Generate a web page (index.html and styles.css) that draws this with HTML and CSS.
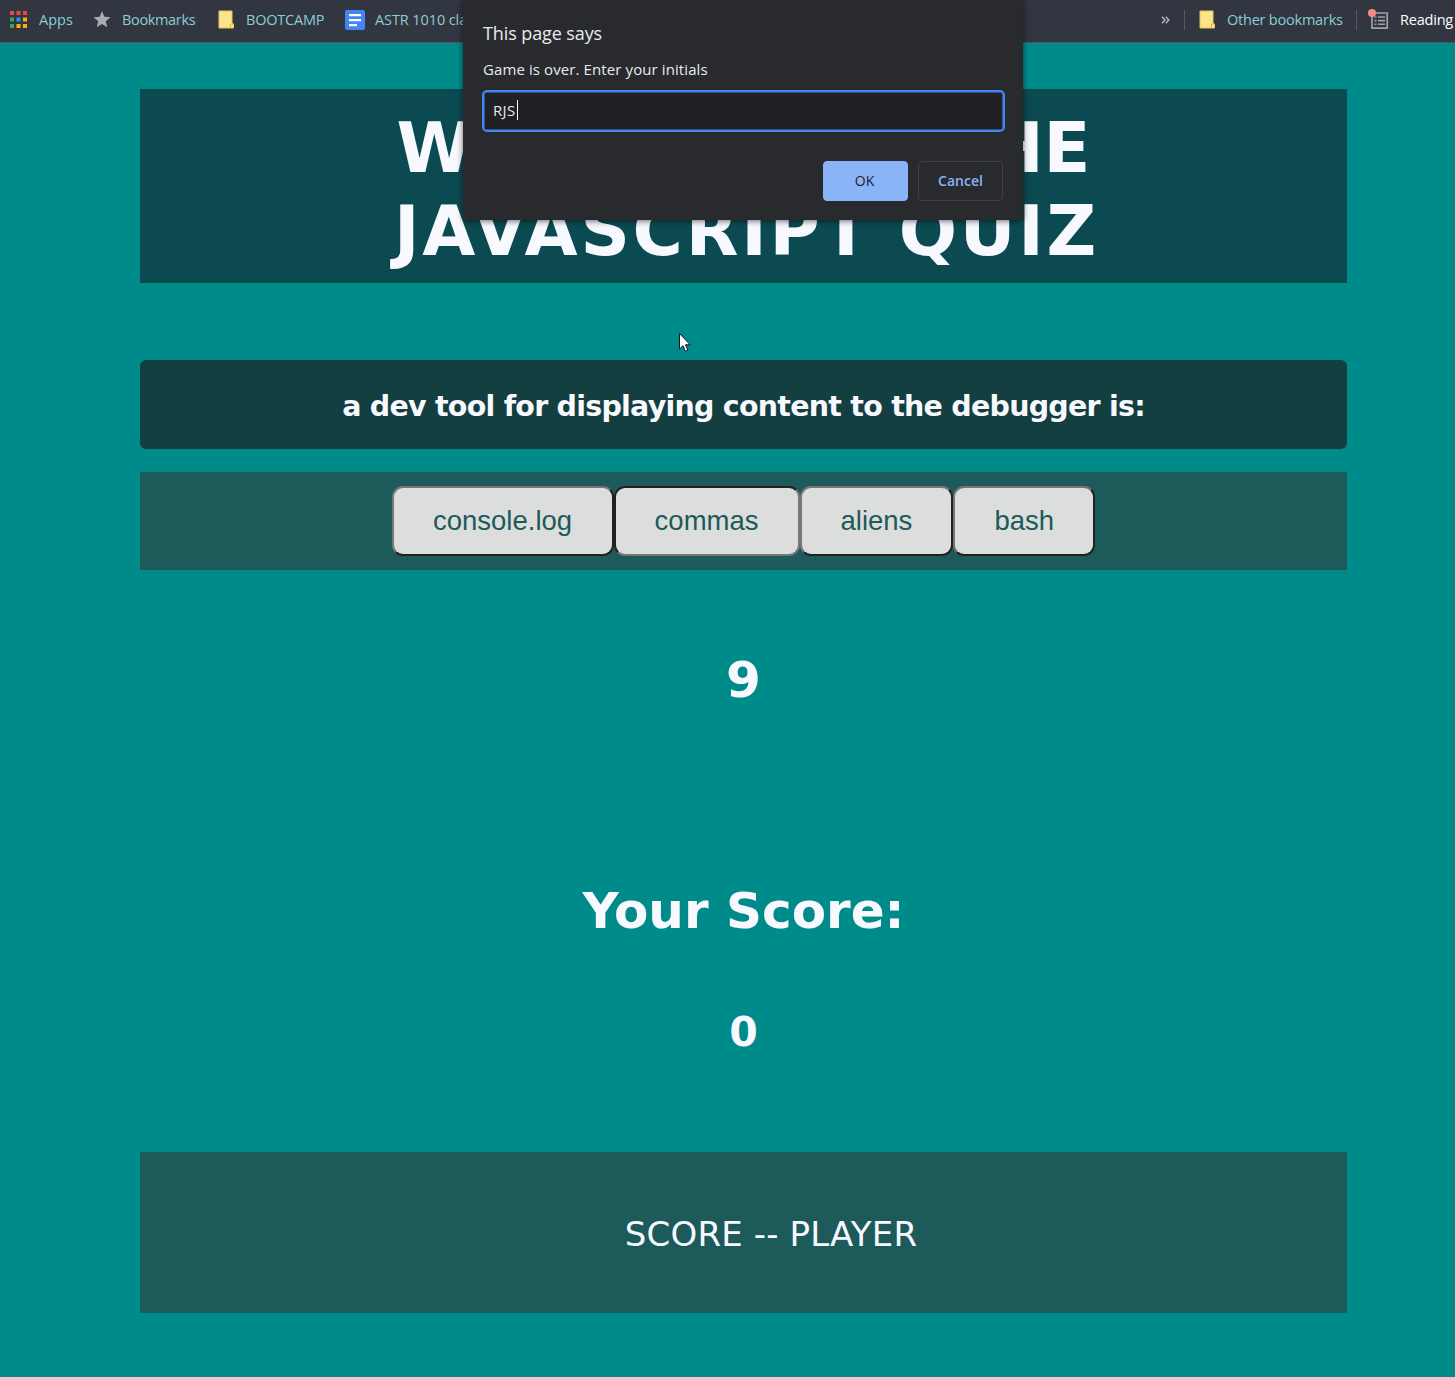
FILE: index.html
```
<!DOCTYPE html>
<html lang="en">
<head>
<meta charset="utf-8">
<title>JavaScript Quiz</title>
<link rel="stylesheet" href="styles.css">
</head>
<body>
<nav class="bookmarks">
  <svg class="apps-icon" width="17" height="17" viewBox="0 0 17 17"><path fill="#f04438" d="M0 0h4v4H0zM6.500 0h4v4h-4zM13 0h4v4h-4z"/><path fill="#34a853" d="M0 6.500h4v4H0zM0 13h4v4H0z"/><path fill="#2a8cf4" d="M6.500 6.500h4v4h-4z"/><path fill="#fbaf0a" d="M13 6.500h4v4h-4zM6.500 13h4v4h-4zM13 13h4v4h-4z"/></svg>
  <span class="bm bm-apps">Apps</span>
  <svg class="star-icon" width="18" height="17" viewBox="0 0 18 17"><path fill="#a9adb0" d="M9 0l2.300 5.800 6.200.4-4.800 4 1.600 6.100L9 12.900l-5.300 3.400 1.600-6.100-4.800-4 6.200-.4z"/></svg>
  <span class="bm bm-book">Bookmarks</span>
  <svg class="folder-icon" width="17" height="19" viewBox="0 0 17 19"><path fill="#fde38b" stroke="#e5c55d" d="M1 1h13v12l1.500 1v4H1z"/><path fill="none" stroke="#d9b640" d="M12.500 17.500v-3.500h2.500"/></svg>
  <span class="bm bm-camp">BOOTCAMP</span>
  <svg class="doc-icon" width="20" height="20" viewBox="0 0 20 20"><rect width="20" height="20" rx="2" fill="#4285f4"/><path fill="#fff" d="M4 4h12v2.200H4zM4 9h12v2.200H4zM4 14h8v2.200H4z"/></svg>
  <span class="bm bm-astr">ASTR 1010 class</span>
  <div class="bookmarks-right">
    <svg class="more-icon" width="9" height="8" viewBox="0 0 9 8"><path fill="none" stroke="#b4b9c0" stroke-width="1.400" d="M1 .8L4 4 1 7.200M4.800.8l3 3.200-3 3.200"/></svg>
    <i class="divider"></i>
    <svg class="folder-icon other" width="17" height="19" viewBox="0 0 17 19"><path fill="#fde38b" stroke="#e5c55d" d="M1 1h13v12l1.500 1v4H1z"/><path fill="none" stroke="#d9b640" d="M12.500 17.500v-3.500h2.500"/></svg>
    <span class="bm bm-other">Other bookmarks</span>
    <i class="divider second"></i>
    <svg class="list-icon" width="21" height="21" viewBox="0 0 21 21"><path fill="none" stroke="#9fa3a7" stroke-width="1.700" d="M4 4h15.200v15.200H4z"/><path fill="none" stroke="#9fa3a7" stroke-width="1.600" d="M6.500 8h2M10 8h7M6.500 11.600h2M10 11.600h7M6.500 15.200h2M10 15.200h7"/><circle cx="4" cy="4" r="4" fill="#f28b82"/></svg>
    <span class="bm bm-read">Reading</span>
  </div>
</nav>
<main class="page">
  <h1 class="title"><span class="line-one">WELCOME TO THE</span><span class="line-two">JAVASCRIPT QUIZ</span></h1>
  <h2 class="question"><span>a dev tool for displaying content to the debugger is:</span></h2>
  <div class="answers">
    <button class="answer">console.log</button>
    <button class="answer active">commas</button>
    <button class="answer">aliens</button>
    <button class="answer">bash</button>
  </div>
  <div class="timer">9</div>
  <div class="score-label">Your Score:</div>
  <div class="score">0</div>
  <div class="ranking"><span>SCORE -- PLAYER</span></div>
</main>
<section class="dialog">
  <div class="dialog-title"><span>This page says</span></div>
  <div class="dialog-message"><span>Game is over. Enter your initials</span></div>
  <div class="field"><span class="entry">RJS</span><i class="caret"></i></div>
  <div class="actions">
    <button class="action ok">OK</button>
    <button class="action cancel">Cancel</button>
  </div>
</section>
<svg class="cursor" width="14" height="21" viewBox="0 0 14 21"><path fill="#fff" stroke="#10151f" d="M.5.500v15.500l3.500-3.300 2.300 5.500 2.500-1-2.300-5.400h4.800z"/></svg>
</body>
</html>
```

FILE: styles.css
```
* { box-sizing: border-box; }
body {
  margin: 0;
  height: 1377px;
  overflow: hidden;
  background: #008b8b;
  color: #f8f8ff;
  font-family: Verdana, "DejaVu Sans", sans-serif;
}
svg { display: block; flex: none; }

.bookmarks {
  display: flex;
  align-items: center;
  height: 43px;
  padding: 0 0 3px 10px;
  background: #313640;
  border-bottom: 1px solid #54565e;
  font: 14.5px/20px "Segoe UI", "Open Sans", sans-serif;
  color: #8ccdd6;
  white-space: nowrap;
}
.bm { flex: none; }
.bm-apps { width: 55px; margin-left: 12px; margin-right: -1px; }
.bm-book { width: 96px; margin-left: 11px; letter-spacing: -.35px; }
.bm-camp { width: 99px; margin-left: 11px; letter-spacing: -.2px; }
.bm-astr { margin-left: 10px; letter-spacing: -.1px; }
.bookmarks-right { display: flex; align-items: center; margin-left: auto; width: 294px; flex: none; }
.divider { width: 1px; height: 20px; margin: 0 14px; background: #555b65; flex: none; }
.bm-other { width: 116px; margin-left: 11px; letter-spacing: -.22px; }
.divider.second { margin: 0 11px 0 13px; }
.bm-read { margin-left: 11px; color: #fff; letter-spacing: -.2px; }

.page { width: 1207px; margin: 46px 0 0 140px; text-align: center; }
.title {
  height: 194px;
  margin: 0;
  padding-top: 18px;
  background: #0c4a52;
  font-size: 68.600px;
  line-height: 83px;
}
.line-one, .line-two { display: block; }
.line-two { padding-left: 6px; letter-spacing: 2.75px; }
.question {
  height: 89px;
  margin: 77px 0 23px;
  border-radius: 6px;
  background: #143f40;
  font-size: 28.500px;
  line-height: 93px;
  letter-spacing: -.76px;
}
.answers {
  display: flex;
  justify-content: center;
  align-items: center;
  height: 98px;
  background: #1d5a5a;
}
.answer {
  height: 70px;
  padding: 0 39px;
  border: 2px solid;
  border-color: #767676 #212121 #212121 #767676;
  border-radius: 11px;
  background: #dcdedd;
  color: #1d5a5a;
  font: 27.500px "Liberation Sans", Arial, sans-serif;
}
.answer:first-child { padding-right: 39.500px; }
.answer.active { border-color: #212121 #767676 #767676 #212121; }
.timer, .score-label, .score { font-weight: bold; }
.timer { margin-top: 80px; font-size: 50px; line-height: 60px; }
.score-label { margin-top: 171px; font-size: 50px; line-height: 60px; }
.score { margin-top: 66px; font-size: 41px; line-height: 50px; }
.ranking {
  height: 161px;
  margin-top: 95px;
  padding-left: 55px;
  background: #1d5a5a;
  font-size: 34px;
  line-height: 165px;
  letter-spacing: .15px;
}

.dialog {
  position: absolute;
  left: 463px;
  top: 0;
  width: 560px;
  height: 220px;
  padding: 22px 18px 0 19px;
  border-radius: 0 0 4px 4px;
  background: #292a2d;
  box-shadow: 0 1px 6px rgba(0, 0, 0, .6);
  color: #e8eaed;
  font: 15px/20px "Segoe UI", "Open Sans", sans-serif;
}
.dialog-title { height: 22px; padding-left: 1px; font-size: 18px; line-height: 22px; letter-spacing: -.1px; }
.dialog-message { height: 20px; margin-top: 15px; padding-left: 1px; letter-spacing: .1px; }
.field {
  display: flex;
  align-items: center;
  height: 42px;
  margin-top: 11px;
  padding: 0 0 2px 9px;
  border: 2px solid #4285f4;
  border-radius: 5px;
  background: #202124;
  box-shadow: inset 0 0 0 .5px #4285f4;
}
.caret { width: 1px; height: 20px; background: #fff; }
.entry { width: 24px; letter-spacing: .3px; }
.actions { display: flex; justify-content: flex-end; gap: 10px; margin: 29px 2px 0 0; }
.action {
  width: 85px;
  height: 40px;
  padding: 0 0 2px;
  border: 1px solid #8ab4f8;
  border-radius: 4px;
  background: #8ab4f8;
  color: #202124;
  font: 600 14px "Segoe UI", "Open Sans", sans-serif;
}
.ok { padding-right: 2px; font-weight: 500; }
.cancel { border-color: #3c4043; background: transparent; color: #8ab4f8; }
.cursor { position: absolute; left: 679px; top: 333px; }
```
